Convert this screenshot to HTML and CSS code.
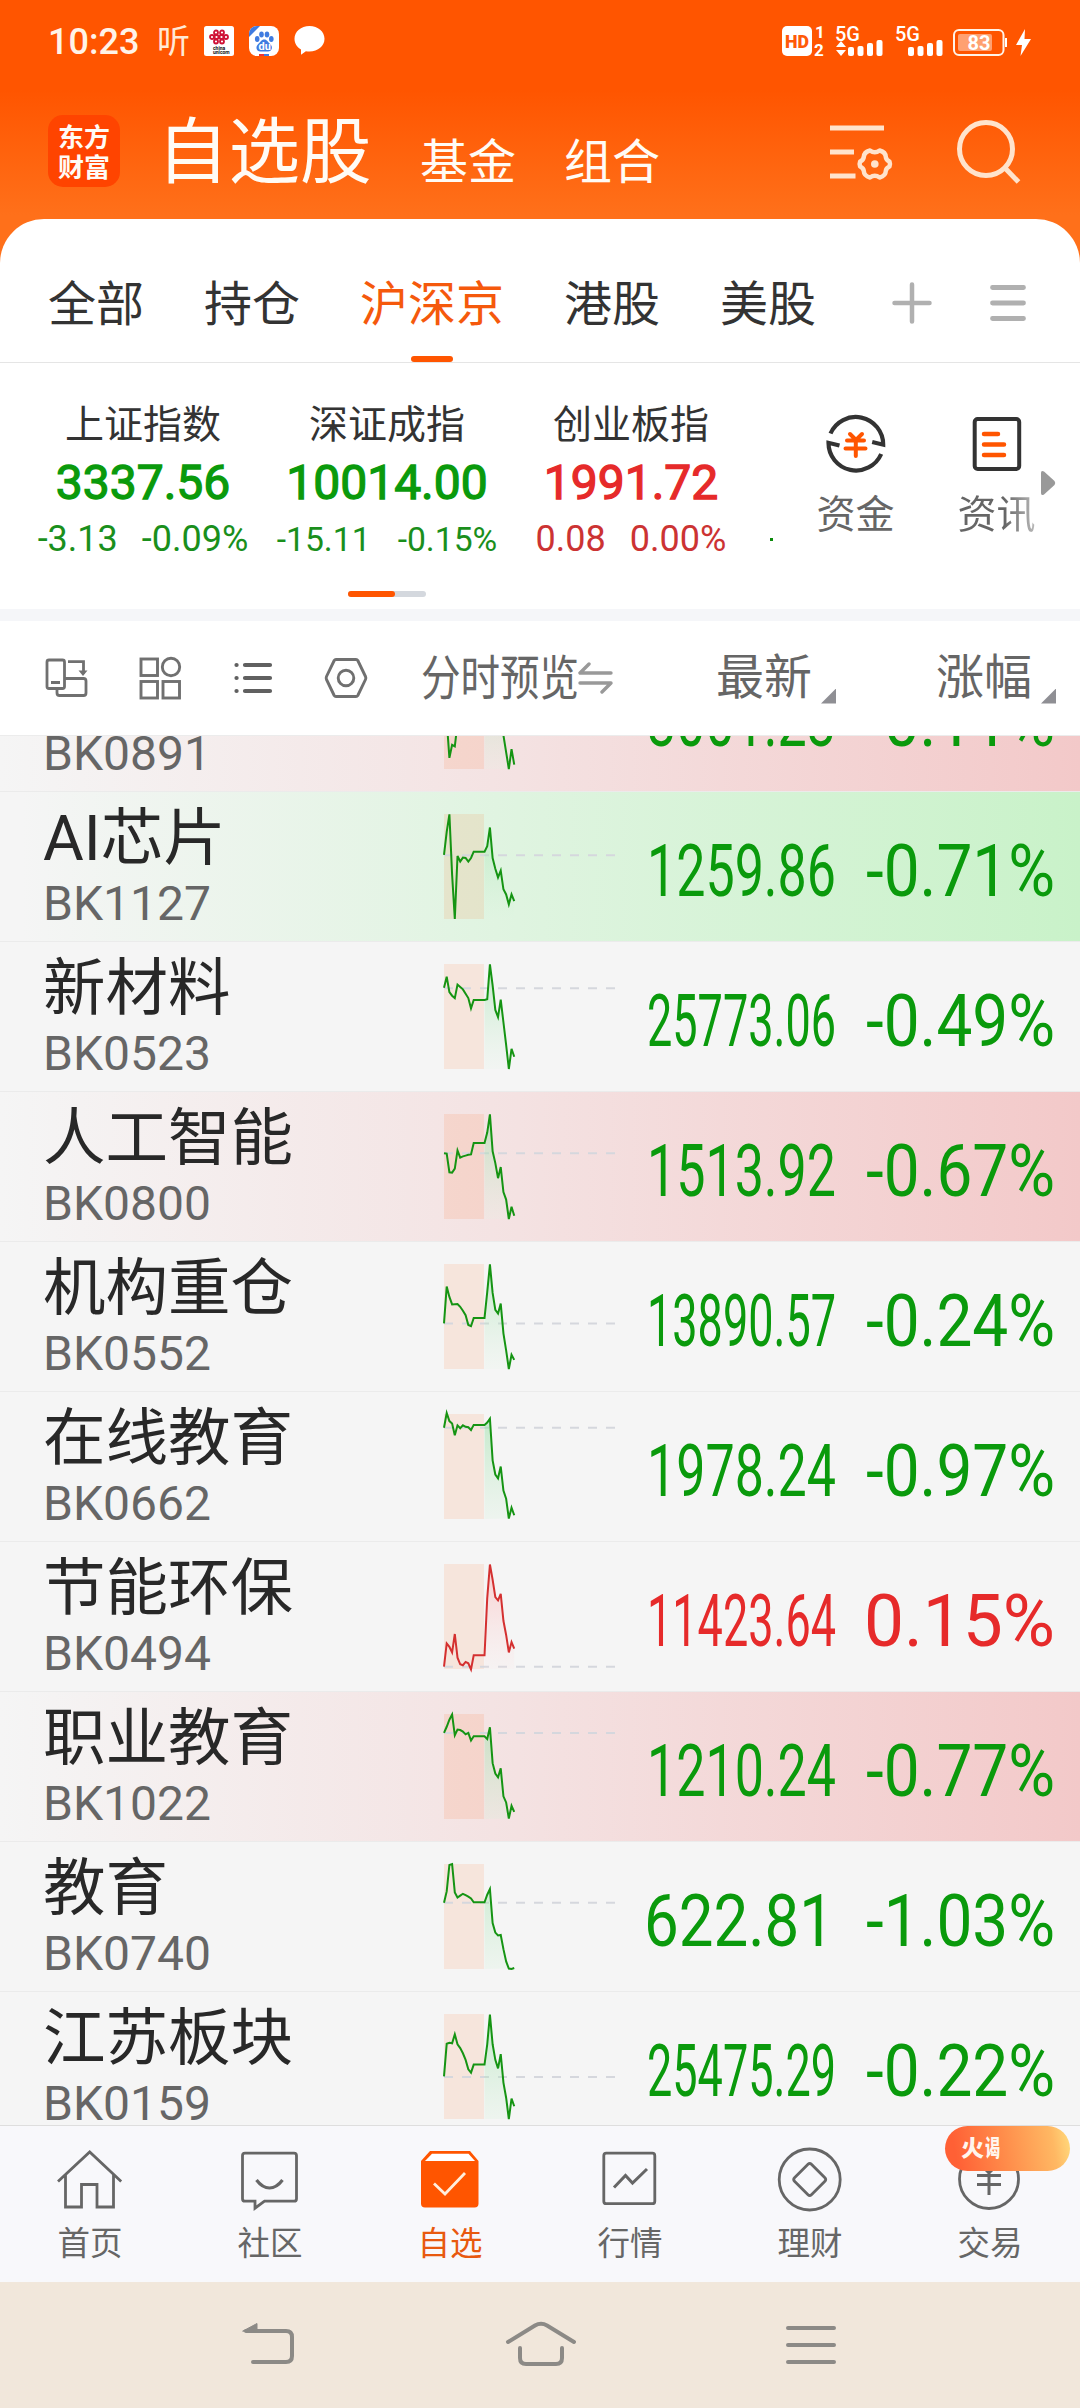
FILE: index.html
```html
<!DOCTYPE html>
<html lang="zh-CN">
<head>
<meta charset="utf-8">
<title>自选股</title>
<link rel="stylesheet" href="styles.css">
</head>
<body>
<div class="app">
  <div class="status">
    <span class="clock">10:23</span>
    <span class="ting">听</span>
    <svg class="s-icon" width="30" height="30" viewBox="0 0 30 30"><rect width="30" height="30" rx="2.5" fill="#fff"/><g fill="none" stroke="#cf1236" stroke-width="1.8"><circle cx="12" cy="6.500" r="2"/><circle cx="18" cy="6.500" r="2"/><circle cx="8" cy="11" r="2"/><circle cx="22" cy="11" r="2"/><circle cx="12.500" cy="11" r="2"/><circle cx="17.500" cy="11" r="2"/><circle cx="12" cy="15.500" r="2"/><circle cx="18" cy="15.500" r="2"/></g><text class="union" x="9" y="24">china</text><text class="union" x="9" y="28">unicom</text></svg>
    <svg class="s-icon" width="30" height="30" viewBox="0 0 30 30"><defs><clipPath id="app-clip"><rect width="30" height="30" rx="8"/></clipPath></defs><g clip-path="url(#app-clip)"><rect width="30" height="30" fill="#fff"/><path d="M0 0H11L0 11Z" fill="#3f7be0"/><rect x="10" y="28" width="5" height="2" fill="#e33"/><rect x="15" y="28" width="5" height="2" fill="#3f7be0"/></g><g fill="#3f7be0"><ellipse cx="8.200" cy="13" rx="2.300" ry="3"/><ellipse cx="12.500" cy="8.500" rx="2.300" ry="3"/><ellipse cx="18" cy="8.500" rx="2.300" ry="3"/><ellipse cx="22.300" cy="13" rx="2.300" ry="3"/><path d="M15.200 13.500c3 0 3.500 2.500 6 4.500 3 2.800 2 7.500-2.200 7.500h-7.600c-4.200 0-5.200-4.700-2.200-7.500 2.500-2 3-4.500 6-4.500Z"/></g><text class="du" x="9.500" y="23.500">du</text></svg>
    <svg class="s-icon" width="31" height="30" viewBox="0 0 31 30"><path d="M15.500 0C24 0 30.500 5.500 30.500 12.800S24 25.500 15.500 25.500c-1.300 0-2.500-.1-3.600-.3L7 28.800v-5.300C2.900 21.200.5 17.300.5 12.800.5 5.500 7 0 15.500 0Z" fill="#fff"/></svg>
    <svg class="signals" width="252" height="40" viewBox="780 22 252 40">
      <rect x="783" y="27" width="30" height="30" rx="5" fill="#fff"/>
      <text class="hd" x="786" y="49" textLength="24" lengthAdjust="spacingAndGlyphs">HD</text>
      <text class="sim" x="816" y="39">1</text><text class="sim" x="815" y="57">2</text>
      <text class="net" x="836" y="42" textLength="25" lengthAdjust="spacingAndGlyphs">5G</text>
      <text class="net" x="896" y="42" textLength="25" lengthAdjust="spacingAndGlyphs">5G</text>
      <g fill="#fff"><path d="M837 48l5-6 5 6zM837 51h10l-5 6z"/><rect x="849" y="48" width="6" height="9" rx="2"/><rect x="858.500" y="47" width="6" height="10" rx="2"/><rect x="868" y="44" width="6" height="13" rx="2"/><rect x="877.500" y="41" width="6" height="16" rx="2"/><rect x="909" y="48" width="6" height="9" rx="2"/><rect x="918.500" y="47" width="6" height="10" rx="2"/><rect x="928" y="44" width="6" height="13" rx="2"/><rect x="937.500" y="41" width="6" height="16" rx="2"/></g>
      <rect x="955" y="31" width="49.500" height="25" rx="5" fill="none" stroke="#fff3e8" stroke-width="2"/><rect x="959" y="35" width="34" height="17" rx="2" fill="#ffa071"/><rect x="1006" y="39" width="2" height="9" fill="#fff"/>
      <text class="batt" x="968.500" y="51">83</text>
      <path d="M1026 30l-9 16h6l-1.500 11 10.500-17h-6.500z" fill="#fff"/>
    </svg>
  </div>

  <div class="titlebar">
    <div class="logo"><span>东方</span><span>财富</span></div>
    <h1 class="title">自选股</h1>
    <span class="sub">基金</span>
    <span class="sub">组合</span>
    <svg class="i-filter" width="64" height="60" viewBox="830 120 64 60" fill="none" stroke="#ffe3cc" stroke-width="5"><path d="M831 127h54M831 151h24M831 175h25.500"/><path stroke-width="4.500" stroke-linejoin="round" d="M871 149.500q4.800 3.500 9.600 0q6 1.500 6.200 6.500q.3 3 3.700 4.500q1 2.500 0 5q-3.400 1.500-3.700 4.500q-.2 5-6.200 6.500q-4.800-3.500-9.600 0q-6-1.500-6.200-6.500q-.3-3-3.700-4.500q-1-2.500 0-5q3.400-1.500 3.700-4.500q.2-5 6.200-6.500Z"/><circle cx="875.800" cy="163" r="3.800" fill="#ffe3cc" stroke="none"/></svg>
    <svg class="i-search" width="66" height="66" viewBox="956 117 66 66" fill="none" stroke="#ffe3cc" stroke-width="5"><circle cx="987" cy="148" r="26.500"/><path d="M1006 167l13.500 14"/></svg>
  </div>

  <div class="panel">
    <div class="tabs">
      <span class="tab">全部</span><span class="tab">持仓</span><span class="tab tab-on">沪深京</span><span class="tab">港股</span><span class="tab">美股</span>
      <svg class="i-add" width="40" height="42" viewBox="0 0 40 42"><path d="M2.500 21h35M20 2.500v37" stroke="#b0b0b0" stroke-width="4.500" stroke-linecap="round"/></svg>
      <svg class="i-list" width="38" height="42" viewBox="0 0 38 42"><path d="M3.500 5.500h31M3.500 21h31M3.500 36.500h31" stroke="#b0b0b0" stroke-width="4.800" stroke-linecap="round"/></svg>
    </div>
    <div class="indices">
      <div class="cards">
        <div class="card down"><b>上证指数</b><strong>3337.56</strong><span>-3.13</span><span>-0.09%</span></div>
        <div class="card down card-tight"><b>深证成指</b><strong>10014.00</strong><span>-15.11</span><span>-0.15%</span></div>
        <div class="card up"><b>创业板指</b><strong>1991.72</strong><span>0.08</span><span>0.00%</span></div>
        <i class="peek"></i>
      </div>
      <div class="links">
        <div class="link"><svg width="60" height="62" viewBox="826 413 60 62" fill="none" stroke="#333" stroke-width="4.200"><path d="M830.500 433.500A27.500 27.500 0 0 1 883.200 444.700l-11-2.700"/><path d="M881.200 454A27.500 27.500 0 0 1 828.500 442.800l11 2.700"/><path stroke="#ff5500" stroke-width="4" stroke-linecap="round" d="M850 434l6 6 6-6M847 440.500h17M845.500 448.500h20M855.800 440v16"/></svg><span>资金</span></div>
        <div class="link"><svg width="52" height="62" viewBox="971 413 52 62" fill="none" stroke="#333" stroke-width="4"><rect x="974.700" y="419" width="44.500" height="50" rx="3"/><path stroke="#ff5500" stroke-width="4.500" stroke-linecap="round" d="M984 434h14M984 444.500h20M984 455h20"/></svg><span class="fade">资讯</span></div>
      </div>
      <svg class="more" width="16" height="26" viewBox="0 0 16 26"><path d="M1 3q0-3 3-1.500L14.500 11q1.500 2 0 4L4 24.500Q1 26 1 23Z" fill="#999"/></svg>
      <div class="pager"><i></i></div>
    </div>
    <div class="toolbar">
      <svg width="44" height="44" viewBox="46 656 44 44" fill="none" stroke="#707070" stroke-width="2.800"><rect x="48" y="660" width="17.500" height="28.500" rx="2"/><path d="M52 682.500h9M58 689v4q0 2.500 2.500 2.500h24q2.500 0 2.500-2.500v-12q0-2.500-2.500-2.500H66M69 661.700h15.500v12"/><path d="M79.500 670.500h9l-4.500 5.500z" fill="#707070" stroke="none"/></svg>
      <svg width="44" height="44" viewBox="138 656 44 44" fill="none" stroke="#707070" stroke-width="2.900"><rect x="141" y="659" width="16.500" height="16.500"/><circle cx="171" cy="667" r="8.700"/><rect x="141" y="681.500" width="16.500" height="16.500"/><rect x="163" y="681.500" width="16.500" height="16.500"/></svg>
      <svg width="44" height="44" viewBox="231 656 44 44" fill="none" stroke="#606060" stroke-width="4.200" stroke-linecap="round"><path d="M236.500 665h.1M236.500 678h.1M236.500 691h.1M245 665h25M245 678h25M245 691h25"/></svg>
      <svg width="44" height="44" viewBox="324 656 44 44" fill="none" stroke="#707070" stroke-width="2.900"><path stroke-linejoin="round" d="M336 659.500h20q1.200 0 1.800 1l7.700 16q.7 1.500 0 3l-7.700 16q-.6 1-1.800 1h-20q-1.200 0-1.800-1l-7.700-16q-.7-1.500 0-3l7.700-16q.6-1 1.800-1Z"/><circle cx="346" cy="678" r="7.800"/></svg>
      <svg class="preview" width="158" height="60" viewBox="0 0 158 60"><text x="0" y="46.500" textLength="158" lengthAdjust="spacingAndGlyphs">分时预览</text></svg>
      <svg class="swap" width="36" height="34" viewBox="0 0 36 34" fill="none" stroke="#999" stroke-width="3.400" stroke-linecap="round" stroke-linejoin="round"><path d="M11 3L2 12h31M2 22h31l-9 9"/></svg>
      <span class="col c-new">最新</span><i class="tri"></i>
      <span class="col c-chg">涨幅</span><i class="tri"></i>
    </div>
  </div>

  <svg class="defs" width="0" height="0"><defs>
    <linearGradient id="fg" gradientUnits="userSpaceOnUse" x1="0" y1="0" x2="0" y2="265"><stop offset="0" stop-color="#7fd98f" stop-opacity=".45"/><stop offset="1" stop-color="#dff5e2" stop-opacity=".15"/></linearGradient>
    <linearGradient id="fr" gradientUnits="userSpaceOnUse" x1="0" y1="0" x2="0" y2="222"><stop offset="0" stop-color="#ff9a9a" stop-opacity=".45"/><stop offset="1" stop-color="#ffdede" stop-opacity=".12"/></linearGradient>
  </defs></svg>

  <div class="list">
    <div class="row red"><div class="name"><span class="code-only">BK0891</span></div>
      <svg class="spark" viewBox="0 0 63.3 265" preserveAspectRatio="none"><rect class="zone" width="14.800" height="265"/><path fill="url(#fg)" d="M15 265V120L17 20 22 180 24 265Z"/><path class="line" d="M0 100L1.400 180 2 237 3 204 4 208 5 150 11 120 15 120 17 10 20 130 22 180 24 265 25 215 26 254"/></svg>
      <svg class="num" viewBox="0 0 190 150"><text x="0" y="103.500" textLength="189" lengthAdjust="spacingAndGlyphs">3001.23</text></svg>
      <svg class="num" viewBox="0 0 190 150"><text x="0" y="103.500" textLength="189" lengthAdjust="spacingAndGlyphs">-0.11%</text></svg></div>
    <div class="row green"><div class="name"><b>AI芯片</b><span>BK1127</span></div>
      <svg class="spark" viewBox="0 0 63.300 265" preserveAspectRatio="none"><rect class="zone" width="14.800" height="265"/><path class="dash" d="M0 104H63.300"/><path fill="url(#fg)" d="M15 265V95L16 81 17 34 18 111 19 138 20 160 21 143 22 190 23 203 24 228 25 203 26 220V265Z"/><path class="line" d="M0 103L1 45 2 1 3 153 4 265 5 106 6 120 7 110 8 111 9 120 10 111 11 95 15 95 16 81 17 34 18 111 19 138 20 160 21 143 22 190 23 203 24 228 25 203 26 220"/></svg>
      <svg class="num" viewBox="0 0 190 150"><text x="0" y="103.500" textLength="189" lengthAdjust="spacingAndGlyphs">1259.86</text></svg>
      <svg class="num" viewBox="0 0 190 150"><text x="0" y="103.500" textLength="189" lengthAdjust="spacingAndGlyphs">-0.71%</text></svg></div>
    <div class="row"><div class="name"><b>新材料</b><span>BK0523</span></div>
      <svg class="spark" viewBox="0 0 63.300 265" preserveAspectRatio="none"><rect class="zone" width="14.800" height="265"/><path class="dash" d="M0 61H63.300"/><path fill="url(#fg)" d="M15 265V91L16 89 17 1 18 54 19 116 20 134 21 90 22 147 23 204 24 265Z"/><path class="line" d="M0 60L1 32 2 71 3 80 4 86 5 52 6 58 7 64 8 75 9 86 10 112 11 91 15 91 16 89 17 1 18 54 19 116 20 134 21 90 22 147 23 204 24 265 25 214 26 234"/></svg>
      <svg class="num" viewBox="0 0 190 150"><text x="0" y="103.500" textLength="189" lengthAdjust="spacingAndGlyphs">25773.06</text></svg>
      <svg class="num" viewBox="0 0 190 150"><text x="0" y="103.500" textLength="189" lengthAdjust="spacingAndGlyphs">-0.49%</text></svg></div>
    <div class="row red"><div class="name"><b>人工智能</b><span>BK0800</span></div>
      <svg class="spark" viewBox="0 0 63.300 265" preserveAspectRatio="none"><rect class="zone" width="14.800" height="265"/><path class="dash" d="M0 99H63.300"/><path fill="url(#fg)" d="M15 265V73L16 47 17 1 18 94 19 124 20 162 21 134 22 197 23 216 24 265Z"/><path class="line" d="M0 99L1 100 2 147 3 148 4 138 5 92 6 110 7 107 8 105 9 103 10 102 11 73 15 73 16 47 17 1 18 94 19 124 20 162 21 134 22 197 23 216 24 265 25 234 26 257"/></svg>
      <svg class="num" viewBox="0 0 190 150"><text x="0" y="103.500" textLength="189" lengthAdjust="spacingAndGlyphs">1513.92</text></svg>
      <svg class="num" viewBox="0 0 190 150"><text x="0" y="103.500" textLength="189" lengthAdjust="spacingAndGlyphs">-0.67%</text></svg></div>
    <div class="row"><div class="name"><b>机构重仓</b><span>BK0552</span></div>
      <svg class="spark" viewBox="0 0 63.300 265" preserveAspectRatio="none"><rect class="zone" width="14.800" height="265"/><path class="dash" d="M0 150H63.300"/><path fill="url(#fg)" d="M15 265V136L16 71 17 1 18 73 19 116 20 125 21 100 22 175 23 218 24 265Z"/><path class="line" d="M0 150L1 57 2 83 3 102 5 101 6 108 7 118 8 129 9 154 10 157 11 136 15 136 16 71 17 1 18 73 19 116 20 125 21 100 22 175 23 218 24 265 25 229 26 242"/></svg>
      <svg class="num" viewBox="0 0 190 150"><text x="0" y="103.500" textLength="189" lengthAdjust="spacingAndGlyphs">13890.57</text></svg>
      <svg class="num" viewBox="0 0 190 150"><text x="0" y="103.500" textLength="189" lengthAdjust="spacingAndGlyphs">-0.24%</text></svg></div>
    <div class="row"><div class="name"><b>在线教育</b><span>BK0662</span></div>
      <svg class="spark" viewBox="0 0 63.300 222" preserveAspectRatio="none"><rect class="zone" width="14.800" height="222"/><path class="dash" d="M0 29H63.300"/><path fill="url(#fg)" d="M15 222V23L16 18 17 10 18 98 19 128 20 136 21 111 22 162 23 179 24 221Z"/><path class="line" d="M0 29L1 -2 2 15 3 20 4 45 5 24 6 30 7 24 8 27 9 28 10 34 11 23 15 23 16 18 17 10 18 98 19 128 20 136 21 111 22 162 23 179 24 221 25 198 26 214"/></svg>
      <svg class="num" viewBox="0 0 190 150"><text x="0" y="103.500" textLength="189" lengthAdjust="spacingAndGlyphs">1978.24</text></svg>
      <svg class="num" viewBox="0 0 190 150"><text x="0" y="103.500" textLength="189" lengthAdjust="spacingAndGlyphs">-0.97%</text></svg></div>
    <div class="row rise"><div class="name"><b>节能环保</b><span>BK0494</span></div>
      <svg class="spark" viewBox="0 0 63.300 222" preserveAspectRatio="none"><rect class="zone" width="14.800" height="222"/><path class="dash" d="M0 217H63.300"/><path fill="url(#fr)" d="M15 222V193L16 72 17 1 18 33 19 70 20 77 21 63 22 120 23 150 24 187 25 165 26 179V222Z"/><path class="line" d="M0 217L1 168 2 175 3 187 4 148 5 198 6 212 7 214 8 207 9 210 10 223 11 193 15 193 16 72 17 1 18 33 19 70 20 77 21 63 22 120 23 150 24 187 25 165 26 179"/></svg>
      <svg class="num" viewBox="0 0 190 150"><text x="0" y="103.500" textLength="189" lengthAdjust="spacingAndGlyphs">11423.64</text></svg>
      <svg class="num" viewBox="0 0 190 150"><text x="-2" y="103.500" textLength="191" lengthAdjust="spacingAndGlyphs">0.15%</text></svg></div>
    <div class="row red"><div class="name"><b>职业教育</b><span>BK1022</span></div>
      <svg class="spark" viewBox="0 0 63.300 222" preserveAspectRatio="none"><rect class="zone" width="14.800" height="222"/><path class="dash" d="M0 40H63.300"/><path fill="url(#fg)" d="M15 222V47L16 53 17 28 18 104 19 126 20 134 21 115 22 174 23 187 24 221Z"/><path class="line" d="M0 40L1 27 2 12 3 1 4 45 5 33 6 34 7 37 8 43 9 40 10 56 11 47 15 47 16 53 17 28 18 104 19 126 20 134 21 115 22 174 23 187 24 221 25 194 26 207"/></svg>
      <svg class="num" viewBox="0 0 190 150"><text x="0" y="103.500" textLength="189" lengthAdjust="spacingAndGlyphs">1210.24</text></svg>
      <svg class="num" viewBox="0 0 190 150"><text x="0" y="103.500" textLength="189" lengthAdjust="spacingAndGlyphs">-0.77%</text></svg></div>
    <div class="row"><div class="name"><b>教育</b><span>BK0740</span></div>
      <svg class="spark" viewBox="0 0 63.300 222" preserveAspectRatio="none"><rect class="zone" width="14.800" height="222"/><path class="dash" d="M0 82H63.300"/><path fill="url(#fg)" d="M15 222V81L16 65 17 53 18 125 19 145 20 151 21 150 22 180 23 206 24 221Z"/><path class="line" d="M0 82L1 58 2 2 3 0 4 60 5 71 6 67 7 63 8 66 9 69 10 73 11 81 15 81 16 65 17 53 18 125 19 145 20 151 21 150 22 180 23 206 24 221 25 222 26 220"/></svg>
      <svg class="num" viewBox="0 0 190 150"><text x="-3" y="103.500" textLength="190" lengthAdjust="spacingAndGlyphs">622.81</text></svg>
      <svg class="num" viewBox="0 0 190 150"><text x="0" y="103.500" textLength="189" lengthAdjust="spacingAndGlyphs">-1.03%</text></svg></div>
    <div class="row"><div class="name"><b>江苏板块</b><span>BK0159</span></div>
      <svg class="spark" viewBox="0 0 63.300 222" preserveAspectRatio="none"><rect class="zone" width="14.800" height="222"/><path class="dash" d="M0 133H63.300"/><path fill="url(#fg)" d="M15 222V107L16 64 17 1 18 64 19 97 20 115 21 85 22 145 23 177 24 222Z"/><path class="line" d="M0 132L1 63 2 61 3 62 4 43 5 64 6 72 7 83 8 97 9 117 10 124 11 107 15 107 16 64 17 1 18 64 19 97 20 115 21 85 22 145 23 177 24 222 25 179 26 195"/></svg>
      <svg class="num" viewBox="0 0 190 150"><text x="0" y="103.500" textLength="189" lengthAdjust="spacingAndGlyphs">25475.29</text></svg>
      <svg class="num" viewBox="0 0 190 150"><text x="0" y="103.500" textLength="189" lengthAdjust="spacingAndGlyphs">-0.22%</text></svg></div>
  </div>

  <div class="nav">
    <div class="item"><svg width="70" height="70" viewBox="55 2145 70 70"><path d="M58 2181.500L89.700 2152l31.500 29.500M65.500 2175v32h16v-22.500h15.500V2207h16.500v-32"/></svg><span>首页</span></div>
    <div class="item"><svg width="70" height="70" viewBox="235 2145 70 70"><path d="M245 2153.200h49q2.500 0 2.500 2.500v43q0 2.500-2.500 2.500h-29.500l-9.500 7v-7h-10q-2.500 0-2.500-2.500v-43q0-2.500 2.500-2.500Z"/><path stroke-width="3.200" d="M256.500 2180q6 8 13 8t13-8"/></svg><span>社区</span></div>
    <div class="item item-on"><svg width="70" height="70" viewBox="415 2145 70 70"><path d="M430 2151h40l8.500 10v42.500q0 4-4 4h-49.500q-4 0-4-4V2161Z" fill="#ff5500" stroke="none"/><path d="M432 2153.800h36.500l6.500 7.200h-50Z" fill="#fff" stroke="none"/><path d="M434 2183.500l11 10.500 20-21" stroke="#ffeedd"/></svg><span>自选</span></div>
    <div class="item"><svg width="70" height="70" viewBox="595 2145 70 70"><rect x="603.800" y="2153.200" width="51" height="50.500" rx="2.500"/><path stroke-width="3" d="M614 2187.500l11.500-12 7 7.500 14.500-14"/></svg><span>行情</span></div>
    <div class="item"><svg width="70" height="70" viewBox="775 2145 70 70"><circle cx="809.700" cy="2179.500" r="30.500"/><path stroke-linejoin="round" d="M808 2164.300q1.700-1.700 3.400 0l13.500 13.500q1.700 1.700 0 3.400l-13.500 13.500q-1.700 1.700-3.400 0l-13.500-13.500q-1.700-1.700 0-3.400Z"/></svg><span>理财</span></div>
    <div class="item"><svg width="70" height="70" viewBox="955 2145 70 70"><circle cx="989" cy="2179" r="29.500"/><path stroke-width="3" d="M979 2163l10 10 10-10M977 2175.500h24M977 2184.500h24M989 2172v23"/></svg><span>交易</span><div class="badge"><svg width="42" height="30" viewBox="0 0 42 30"><text x="0" y="23" textLength="23" lengthAdjust="spacingAndGlyphs">火</text><text x="24" y="23" textLength="15" lengthAdjust="spacingAndGlyphs">谒</text></svg></div></div>
  </div>

  <div class="sysbar">
    <svg width="56" height="50" viewBox="241 2320 56 50"><path d="M246 2331h40q6 0 6 6v19q0 6-6 6h-33"/><path d="M243 2331l14-7.500v7.500z" fill="#8c8a86" stroke-width="1"/></svg>
    <svg width="74" height="50" viewBox="504 2320 74 50"><path d="M508 2342l27-16.500q6-3.500 12 0l27 16.500M520 2348v10q0 6 6 6h30q6 0 6-6v-10"/></svg>
    <svg width="56" height="50" viewBox="783 2320 56 50"><path d="M788 2328h46M788 2345h46M788 2362h46"/></svg>
  </div>
</div>
</body>
</html>
```
FILE: styles.css
```css
* { box-sizing: border-box; margin: 0; }
body { font-family: Roboto, "Noto Sans CJK SC", sans-serif; }
svg { display: block; flex: none; }
.app {
  width: 1080px; height: 2408px; overflow: hidden;
  display: flex; flex-direction: column;
  background: linear-gradient(#ff5500 0, #ff5500 90px, #ff701a 215px, #ff701a 300px) #ff701a;
}

/* status bar */
.status { height: 82px; display: flex; align-items: center; padding-left: 48px; flex: none; }
.clock { font-size: 36px; font-weight: 500; line-height: 40px; padding-top: 2px; color: #fff3e8; width: 109px; }
.ting { font-size: 33px; font-weight: 400; line-height: 40px; padding-top: 2px; color: #ffe9d6; width: 47px; }
.s-icon { margin-right: 15px; }
.union { font: 700 5px Roboto, sans-serif; fill: #111; }
.du { font: 700 11px Roboto, sans-serif; fill: #fff; }
.signals { margin-left: 439px; overflow: visible; }
.hd { font: 900 18px Roboto, sans-serif; fill: #ff5a08; }
.sim { font: 700 17px Roboto, sans-serif; fill: #fff; }
.net { font: 500 20px Roboto, sans-serif; fill: #fff; }
.batt { font: 700 20px Roboto, sans-serif; fill: #fff; }

/* title bar */
.titlebar { height: 137px; display: flex; align-items: center; padding-left: 48px; flex: none; color: #fffbf5; }
.logo {
  width: 72px; height: 72px; border-radius: 15px; background: #ff4400;
  display: flex; flex-direction: column; align-items: center; justify-content: center;
  font-family: "Noto Sans CJK SC", sans-serif; font-weight: 700; font-size: 26px; line-height: 30px;
}
.title { font-size: 71.5px; font-weight: 400; line-height: 80px; margin-left: 37px; padding-top: 5px; width: 263px; white-space: nowrap; }
.sub { font-size: 48px; line-height: 56px; padding-top: 25px; width: 144px; }
.i-filter { margin-left: 121px; }
.i-search { margin-left: 62px; }

/* panel */
.panel { background: #fff; border-radius: 44px 44px 0 0; flex: none; }
.tabs { height: 144px; display: flex; align-items: center; gap: 60px; padding-left: 48px; border-bottom: 1px solid #e5e5e5; }
.tab { font-size: 48px; height: 143px; padding-top: 14px; line-height: 144px; color: #333; white-space: nowrap; }
.tab-on { color: #f5590c; position: relative; }
.tab-on::after { content: ""; position: absolute; left: 51px; bottom: 0; width: 42px; height: 6px; border-radius: 3px; background: #ff5500; }
.i-add { margin: 24px 0 0 16px; }
.i-list { margin: 24px 0 0 -3px; }

.indices { height: 246px; display: grid; grid-template-columns: 774px 270px 1fr; grid-template-rows: 228px 6px; }
.cards { display: grid; grid-template-columns: 244px 244px 244px 1fr; padding-left: 21px; overflow: hidden; }
.card { display: grid; grid-template-columns: auto auto; justify-content: center; align-content: start; column-gap: 24px; padding-top: 37px; }
.card b, .card strong { grid-column: 1 / 3; text-align: center; }
.card b { font-size: 39px; font-weight: 400; line-height: 50px; color: #333; }
.card strong { font-size: 48px; font-weight: 400; line-height: 66px; -webkit-text-stroke: 1.3px currentColor; }
.card span { font-size: 36px; line-height: 46px; }
.card-tight { column-gap: 27px; }
.card-tight span { font-size: 33.7px; line-height: 48px; }
.down { color: #0a9a0c; }
.up { color: #e62a2a; }
.down span { color: #1a8f1c; }
.up span { color: #cc3333; }
.peek { width: 3px; height: 3px; background: #0a8a0a; margin: 175px 0 0 17px; }
.links { display: grid; grid-template-columns: 141px 141px; padding-left: 11px; padding-top: 50px; }
.link { display: flex; flex-direction: column; align-items: center; font-size: 39px; line-height: 50px; color: #666; gap: 15px; }
.fade { background: linear-gradient(90deg, #666 60%, #bbb); -webkit-background-clip: text; background-clip: text; color: transparent; }
.more { margin: 107px 0 0 -4px; }
.pager { grid-column: 1 / 4; width: 78px; height: 6px; border-radius: 3px; background: #d4d8de; margin-left: 348px; }
.pager i { display: block; width: 47px; height: 6px; border-radius: 3px; background: #ff5500; }

.toolbar { height: 126px; border-top: 12px solid #f5f6f9; display: flex; align-items: center; padding-left: 45px; color: #666; }
.toolbar > svg { margin-right: 49px; }
.toolbar .preview { margin-left: 4px; margin-right: -1px; }
.preview text { font: 48px Roboto, "Noto Sans CJK SC", sans-serif; fill: #666; }
.toolbar .swap { margin-right: 102px; margin-left: 0; }
.col { font-size: 48px; line-height: 60px; width: 105px; }
.c-chg { margin-left: 100px; }
.tri { width: 15px; height: 15px; background: #8f8f94; clip-path: polygon(100% 0, 100% 100%, 0 100%); margin-top: 36px; }
.defs { position: absolute; }

/* list */
.list { height: 1390px; overflow: hidden; background: #f5f5f5; flex: none; border-top: 1px solid #ececec; }
.row { height: 150px; display: grid; grid-template-columns: 401px 203px 219px 190px; padding-left: 43px; border-bottom: 1px solid #ebebeb; color: #0a9a0c; background: #f5f5f5; }
.row:first-child { margin-top: -94px; }
.red { background: linear-gradient(90deg, #f5f5f5, #f4e2e2 48%, #f3c9c9); }
.green { background: linear-gradient(90deg, #f5f5f5 2%, #dff4e0 48%, #c9f2c9); }
.rise { color: #e62a2a; }
.name { display: flex; flex-direction: column; }
.name b { font-size: 62.5px; font-weight: 400; line-height: 80px; color: #282828; padding-top: 7px; white-space: nowrap; }
.name span { font-size: 48px; line-height: 50px; color: #666; }
.name .code-only { padding-top: 87px; }
.spark { width: 171px; height: 105px; margin-top: 22px; overflow: visible; }
.zone { fill: #ff5500; fill-opacity: .1; }
.line { fill: none; stroke: #159413; stroke-width: 2; vector-effect: non-scaling-stroke; }
.rise .line { stroke: #d43030; }
.dash { fill: none; stroke: #d5d7dd; stroke-width: 2; stroke-dasharray: 9 9; vector-effect: non-scaling-stroke; }
.num { width: 190px; height: 150px; overflow: visible; }
.num text { font: 72px Roboto, sans-serif; fill: currentColor; }

/* bottom navigation */
.nav { height: 157px; background: #f8f8fb; border-top: 1px solid #dedede; display: grid; grid-template-columns: repeat(6, 180px); flex: none; }
.item { display: flex; flex-direction: column; align-items: center; padding-top: 19px; font-size: 32.5px; line-height: 40px; gap: 9px; color: #666; position: relative; }
.item svg { fill: none; stroke: #666; stroke-width: 2.8; }
.item-on { color: #e8590f; }
.badge {
  position: absolute; left: 45px; top: 0; width: 125px; height: 45px; border-radius: 23px;
  background: linear-gradient(80deg, #ff6035 10%, #ff8f4c 50%, #ffb863 85%, #ffdc7e); padding: 7px 0 0 16px;
}
.badge text { font: 900 23px "Noto Sans CJK SC", sans-serif; fill: #fff6ee; stroke: none; }

/* system bar */
.sysbar { height: 126px; background: #f1e7db; display: flex; align-items: center; padding-left: 241px; flex: none; }
.sysbar svg { fill: none; stroke: #8c8a86; stroke-width: 4; stroke-linecap: round; stroke-linejoin: round; }
.sysbar svg + svg { margin-left: 207px; }
.sysbar svg + svg + svg { margin-left: 205px; }
```
